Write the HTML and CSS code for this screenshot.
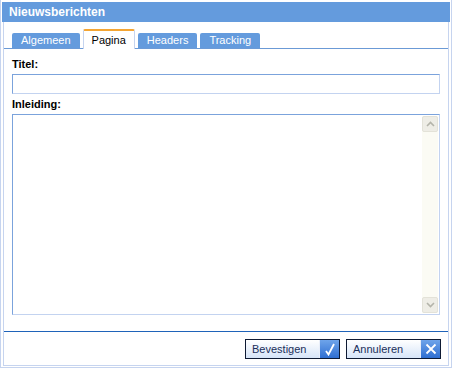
FILE: index.html
```html
<!DOCTYPE html>
<html lang="nl">
<head>
    <meta charset="UTF-8">
    <title>Nieuwsberichten</title>
    <link rel="stylesheet" href="styles.css">
</head>
<body>
    <div class="window">
        <div class="titlebar">Nieuwsberichten</div>
        <div class="panel">
            <div class="tabs">
                <span class="tab">Algemeen</span>
                <span class="tab active">Pagina</span>
                <span class="tab">Headers</span>
                <span class="tab">Tracking</span>
            </div>

            <div class="form">
                <label class="label">Titel:</label>
                <div class="field"></div>

                <label class="label">Inleiding:</label>
                <div class="field area">
                    <div class="scrollbar">
                        <div class="arrow">
                            <svg width="9" height="6" viewBox="0 0 9 6"><path d="M1 5 L4.5 1.5 L8 5" fill="none" stroke="#b4b4aa" stroke-width="1.6"/></svg>
                        </div>
                        <div class="track"></div>
                        <div class="arrow">
                            <svg width="9" height="6" viewBox="0 0 9 6"><path d="M1 1 L4.5 4.5 L8 1" fill="none" stroke="#b4b4aa" stroke-width="1.6"/></svg>
                        </div>
                    </div>
                </div>
            </div>

            <div class="footer">
                <button class="btn">
                    <span class="btn-text">Bevestigen</span>
                    <span class="btn-icon">
                        <svg width="12" height="13" viewBox="0 0 12 13"><path d="M2 8 L4.5 11.5 L10 1" fill="none" stroke="#fff" stroke-width="1.8"/></svg>
                    </span>
                </button>
                <button class="btn">
                    <span class="btn-text">Annuleren</span>
                    <span class="btn-icon">
                        <svg width="12" height="12" viewBox="0 0 12 12"><path d="M1.5 1.5 L10.5 10.5 M10.5 1.5 L1.5 10.5" stroke="#fff" stroke-width="1.8"/></svg>
                    </span>
                </button>
            </div>
        </div>
    </div>
</body>
</html>
```

FILE: styles.css
```css
* {
    box-sizing: border-box;
}

body {
    margin: 0;
    background: #fff;
    font-family: "Liberation Sans", Arial, sans-serif;
    font-size: 11px;
}

.window {
    width: 452px;
    height: 368px;
    padding: 2px 1px 1px 1px;
    border: 1px solid #c6d4ef;
    border-top: 0;
    display: flex;
    flex-direction: column;
}

.titlebar {
    height: 20px;
    background: #649bdd;
    color: #fff;
    font-weight: bold;
    font-size: 12px;
    line-height: 20px;
    padding-left: 7px;
}

.panel {
    flex: 1;
    margin: 0 1px;
    border: 1px solid #c6d4ef;
    border-top: 0;
    display: flex;
    flex-direction: column;
}

.tabs {
    display: flex;
    align-items: flex-end;
    gap: 3px;
    height: 27px;
    padding-left: 8px;
    border-bottom: 1px solid #6b9ad6;
}

.tab {
    height: 15px;
    padding: 0 9px;
    background: #649bdd;
    color: #fff;
    line-height: 15px;
    border-radius: 2px 2px 0 0;
}

.tab.active {
    height: 20px;
    padding: 0 8px;
    margin-bottom: -1px;
    background: #fff;
    color: #000;
    line-height: 18px;
    border: 1px solid #c6d4ef;
    border-top: 2px solid #f4a533;
    border-bottom: 0;
}

.form {
    padding: 9px 8px 0 8px;
    display: flex;
    flex-direction: column;
}

.label {
    font-weight: bold;
    height: 16px;
    line-height: 13px;
}

.field {
    height: 20px;
    margin-bottom: 4px;
    border: 1px solid #c3d3f0;
    border-top-color: #7ba3dc;
    border-left-color: #7ba3dc;
}

.field.area {
    height: 201px;
    margin-bottom: 0;
    display: flex;
    justify-content: flex-end;
    padding: 1px;
}

.scrollbar {
    width: 16px;
    display: flex;
    flex-direction: column;
    background: #fbfbf4;
}

.arrow {
    height: 16px;
    border: 1px solid #e3e2d8;
    border-radius: 2px;
    background: #eeede6;
    display: flex;
    align-items: center;
    justify-content: center;
}

.track {
    flex: 1;
}

.footer {
    margin-top: auto;
    border-top: 1px solid #1f63b9;
    height: 34px;
    padding: 7px 7px 0 0;
    display: flex;
    justify-content: flex-end;
    gap: 6px;
}

.btn {
    height: 20px;
    width: 95px;
    padding: 0;
    margin: 0;
    display: flex;
    border: 1px solid #0e1a33;
    background: linear-gradient(#ffffff, #d6e4f8);
    font-family: "Liberation Sans", Arial, sans-serif;
    font-size: 11px;
    color: #1b2f5a;
    cursor: pointer;
}

.btn-text {
    flex: 1;
    text-align: left;
    padding-left: 6px;
    line-height: 18px;
}

.btn-icon {
    width: 20px;
    display: flex;
    align-items: center;
    justify-content: center;
    background: linear-gradient(#6ea4ea, #2f6fd2);
    border-left: 1px solid #e8eef9;
}
```
